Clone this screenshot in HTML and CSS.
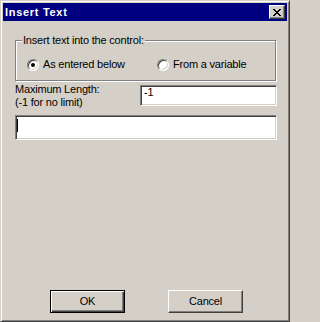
FILE: index.html
```html
<!DOCTYPE html>
<html>
<head>
<meta charset="utf-8">
<link rel="stylesheet" href="styles.css">
</head>
<body>
<div class="window">
  <div class="titlebar">
    <span class="title">Insert Text</span>
    <span class="close">
      <svg width="12" height="10" viewBox="0 0 12 10" shape-rendering="crispEdges">
        <path fill="#000" d="M2 2h2v1H2zM8 2h2v1H8zM3 3h2v1H3zM7 3h2v1H7zM4 4h4v1H4zM5 5h2v1H5zM4 6h4v1H4zM3 7h2v1H3zM7 7h2v1H7zM2 8h2v1H2zM8 8h2v1H8z"/>
      </svg>
    </span>
  </div>
  <div class="content">
    <fieldset class="group">
      <legend class="group-title">Insert text into the control:</legend>
      <div class="options">
        <label class="option option-first"><span class="radio checked"></span>As entered below</label>
        <label class="option"><span class="radio"></span>From a variable</label>
      </div>
    </fieldset>
    <div class="max-row">
      <div class="max-label">Maximum Length:<br>(-1 for no limit)</div>
      <div class="field field-small">-1</div>
    </div>
    <div class="field field-big"><span class="caret"></span></div>
    <div class="spacer"></div>
    <div class="buttons">
      <div class="btn btn-default">OK</div>
      <div class="btn">Cancel</div>
    </div>
  </div>
</div>
</body>
</html>
```

FILE: styles.css
```css
html, body {
  margin: 0;
  padding: 0;
  background: #d4d0c8;
}

body {
  font-family: "Liberation Sans", Arial, sans-serif;
  font-size: 11px;
  letter-spacing: -0.2px;
  color: #000;
}

.window {
  width: 290px;
  height: 322px;
  box-sizing: border-box;
  border: 1px solid;
  border-color: #d4d0c8 #404040 #404040 #d4d0c8;
  box-shadow: inset 1px 1px #fff, inset -1px -1px #808080;
  padding: 2px;
  display: flex;
  flex-direction: column;
  background: #d4d0c8;
}

.titlebar {
  height: 18px;
  background: #000080;
  display: flex;
  align-items: flex-start;
  justify-content: space-between;
}

.title {
  color: #fff;
  font-weight: bold;
  letter-spacing: 0.7px;
  line-height: 18px;
  padding-left: 2px;
}

.close {
  width: 16px;
  height: 14px;
  box-sizing: border-box;
  margin: 2px 2px 0 0;
  background: #d4d0c8;
  border: 1px solid;
  border-color: #fff #404040 #404040 #fff;
  box-shadow: inset -1px -1px #808080;
  display: flex;
  align-items: flex-start;
  justify-content: flex-start;
}

.close svg {
  display: block;
  margin: 1px 0 0 1px;
}

.content {
  flex: 1;
  display: flex;
  flex-direction: column;
  padding: 13px 10px 6px 12px;
}

.group {
  margin: 0 1px 0 0;
  padding: 11px 0 9px 11px;
  border: 1px solid #808080;
  box-shadow: inset 1px 1px #fff, 1px 1px #fff;
  min-width: 0;
}

.group-title {
  margin-left: -5px;
  padding: 0 1px;
  line-height: 13px;
  background: #d4d0c8;
}

.options {
  display: flex;
  align-items: center;
  height: 13px;
  line-height: 13px;
}

.option {
  display: flex;
  align-items: center;
  white-space: nowrap;
}

.option-first {
  width: 130px;
}

.radio {
  position: relative;
  width: 12px;
  height: 12px;
  box-sizing: border-box;
  border-radius: 50%;
  border: 1px solid;
  border-color: #808080 #fff #fff #808080;
  box-shadow: inset 1px 1px #404040, inset -1px -1px #d4d0c8;
  background: #fff;
  margin-right: 4px;
  flex: none;
}

.radio.checked::after {
  content: "";
  position: absolute;
  left: 3px;
  top: 3px;
  width: 4px;
  height: 4px;
  border-radius: 50%;
  background: #000;
}

.max-row {
  display: flex;
  align-items: flex-start;
  justify-content: space-between;
  margin-top: 2px;
}

.max-label {
  line-height: 13px;
}

.field {
  box-sizing: border-box;
  background: #fff;
  border: 1px solid;
  border-color: #808080 #fff #fff #808080;
  box-shadow: inset 1px 1px #404040, inset -1px -1px #d4d0c8;
}

.field-small {
  width: 137px;
  height: 21px;
  margin-top: 2px;
  padding-left: 3px;
  line-height: 13px;
}

.field-big {
  height: 25px;
  margin-top: 6px;
  padding: 3px 0 0 1px;
}

.caret {
  display: block;
  width: 1px;
  height: 13px;
  background: #000;
}

.spacer {
  flex: 1;
}

.buttons {
  display: flex;
  justify-content: center;
  gap: 43px;
  padding-left: 1px;
}

.btn {
  width: 75px;
  height: 23px;
  box-sizing: border-box;
  border: 1px solid;
  border-color: #fff #404040 #404040 #fff;
  box-shadow: inset -1px -1px #808080;
  text-align: center;
  line-height: 21px;
}

.btn-default {
  border-color: #000;
  box-shadow: inset 1px 1px #fff, inset -1px -1px #404040, inset -2px -2px #808080;
}
```
